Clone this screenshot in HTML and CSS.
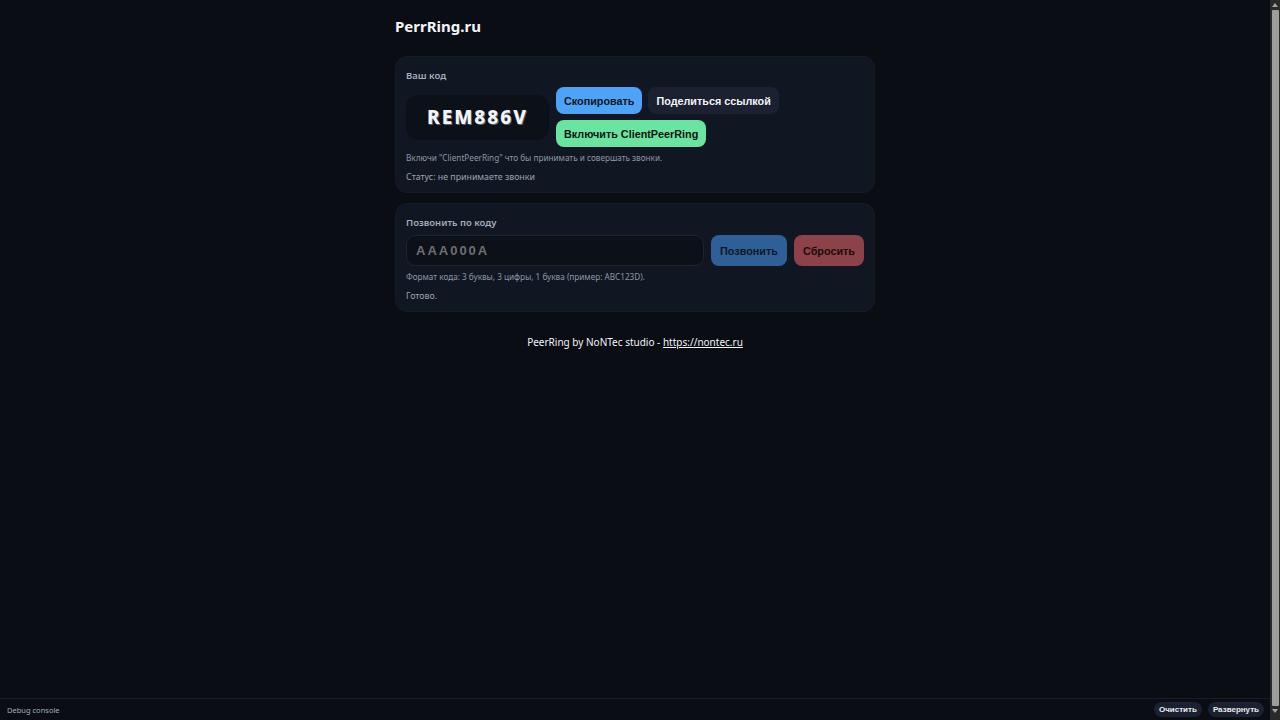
FILE: index.html
```html
<!DOCTYPE html>
<html lang="ru">
<head>
    <meta charset="UTF-8">
    <meta name="viewport" content="width=device-width, initial-scale=1.0">
    <title>PerrRing.ru</title>
    <link rel="stylesheet" href="styles.css">
</head>
<body>
    <div class="container">
        <h1>PerrRing.ru</h1>

        <div class="card">
            <div class="label">Ваш код</div>
            <div class="my-code-row">
                <div class="code-box">REM886V</div>
                <div class="actions">
                    <button class="btn btn-blue">Скопировать</button>
                    <button class="btn btn-dark">Поделиться ссылкой</button>
                    <button class="btn btn-green">Включить ClientPeerRing</button>
                </div>
            </div>
            <div class="hint">Включи "ClientPeerRing" что бы принимать и совершать звонки.</div>
            <div class="status">Статус: не принимаете звонки</div>
        </div>

        <div class="card">
            <div class="label">Позвонить по коду</div>
            <div class="call-row">
                <input type="text" class="code-input" placeholder="AAA000A">
                <button class="btn btn-call">Позвонить</button>
                <button class="btn btn-reset">Сбросить</button>
            </div>
            <div class="hint">Формат кода: 3 буквы, 3 цифры, 1 буква (пример: ABC123D).</div>
            <div class="status">Готово.</div>
        </div>

        <div class="footer">PeerRing by NoNTec studio - <a href="#">https://nontec.ru</a></div>
    </div>

    <div class="debug">
        <span class="debug-title">Debug console</span>
        <div class="debug-actions">
            <button class="pill">Очистить</button>
            <button class="pill">Развернуть</button>
        </div>
    </div>

    <!-- page scrollbar as it shows in the capture -->
    <div class="scrollbar">
        <span class="arrow arrow-up"></span>
        <span class="thumb"></span>
        <span class="arrow arrow-down"></span>
    </div>
</body>
</html>
```

FILE: styles.css
```css
* {
    box-sizing: border-box;
}

html {
    background-color: #0a0d13;
}

body {
    margin: 0;
    padding-right: 10px;
    font-family: "Noto Sans", "Open Sans", sans-serif;
    color: #e5e9f0;
    background-color: #0a0d13;
}

.container {
    max-width: 480px;
    margin: 0 auto;
    padding-top: 16px;
}

h1 {
    font-size: 15px;
    font-weight: 700;
    margin: 0 0 20px 0;
    color: #f3f6fa;
    line-height: 20px;
}

.card {
    background-color: #111722;
    border: 1px solid #151c28;
    border-radius: 12px;
    padding: 12px 10px 8px 10px;
    margin-bottom: 10px;
}

.label {
    font-size: 9.5px;
    font-weight: 600;
    color: #a3adbb;
    line-height: 13px;
    margin-bottom: 6px;
}

.my-code-row {
    display: flex;
    align-items: center;
    gap: 7px;
    margin-top: -1px;
}

.code-box {
    width: 143px;
    height: 45px;
    background-color: #0c1119;
    border-radius: 12px;
    display: flex;
    align-items: center;
    justify-content: center;
    font-size: 19px;
    font-weight: 800;
    letter-spacing: 2px;
    color: #f1f4f8;
    text-shadow: 1px 1px 0 #5a6070;
}

.actions {
    display: flex;
    flex-wrap: wrap;
    gap: 6px;
    width: 240px;
}

.btn {
    font-family: "Liberation Sans", Arial, sans-serif;
    font-size: 10.8px;
    font-weight: 700;
    border: none;
    border-radius: 8px;
    padding: 0 8px;
    height: 27px;
    cursor: pointer;
}

.btn-blue {
    background-color: #4fa3f7;
    color: #0b1624;
}

.btn-dark {
    background-color: #1b2130;
    color: #f2f4f8;
}

.btn-green {
    background-color: #6be3a1;
    color: #08160e;
}

.hint {
    font-size: 8.2px;
    color: #8d97a6;
    margin-top: 5px;
    line-height: 12px;
}

.status {
    font-size: 8.8px;
    color: #9aa4b2;
    margin-top: 7px;
    line-height: 13px;
}

.call-row {
    display: flex;
    gap: 7px;
    align-items: center;
}

.code-input {
    flex: 1;
    min-width: 0;
    height: 31px;
    background-color: #0c1119;
    border: 1px solid #1d2431;
    border-radius: 9px;
    padding: 0 9px;
    font-family: "Liberation Sans", Arial, sans-serif;
    font-size: 13px;
    font-weight: 700;
    letter-spacing: 2px;
    color: #e5e9f0;
    outline: none;
}

.code-input::placeholder {
    color: #6e6f70;
}

.btn-call {
    height: 31px;
    width: 76px;
    padding: 0;
    background-color: #2f5f97;
    color: #0e1724;
}

.btn-reset {
    height: 31px;
    width: 70px;
    padding: 0;
    background-color: #8b4249;
    color: #1c0b0d;
}

.footer {
    text-align: center;
    font-size: 10px;
    color: #f2f4f8;
    margin-top: 23px;
}

.footer a {
    color: #f2f4f8;
}

.debug {
    position: fixed;
    left: 0;
    right: 10px;
    bottom: 0;
    height: 22px;
    border-top: 1px solid #171c26;
    background-color: #0a0d13;
    display: flex;
    align-items: center;
    justify-content: space-between;
    padding: 0 6px 0 7px;
}

.debug-title {
    font-size: 7.5px;
    color: #a3adbb;
}

.debug-actions {
    display: flex;
    gap: 6px;
}

.pill {
    font-family: "Liberation Sans", Arial, sans-serif;
    font-size: 8px;
    font-weight: 700;
    color: #e9edf3;
    background-color: #1b2130;
    border: none;
    border-radius: 8px;
    padding: 0 5px;
    height: 15px;
}

.scrollbar {
    position: fixed;
    top: 0;
    right: 0;
    bottom: 0;
    width: 10px;
    background-color: #2a2a2a;
    display: flex;
    flex-direction: column;
    align-items: center;
    padding: 3px 0;
    gap: 3px;
}

.thumb {
    flex: 1;
    width: 7px;
    border-radius: 1px;
    background-color: #9d9d9d;
}

.arrow {
    width: 0;
    height: 0;
    border-left: 3.5px solid transparent;
    border-right: 3.5px solid transparent;
}

.arrow-up {
    border-bottom: 4px solid #a3a3a3;
}

.arrow-down {
    border-top: 4px solid #a3a3a3;
    margin-bottom: 4px;
}
```
